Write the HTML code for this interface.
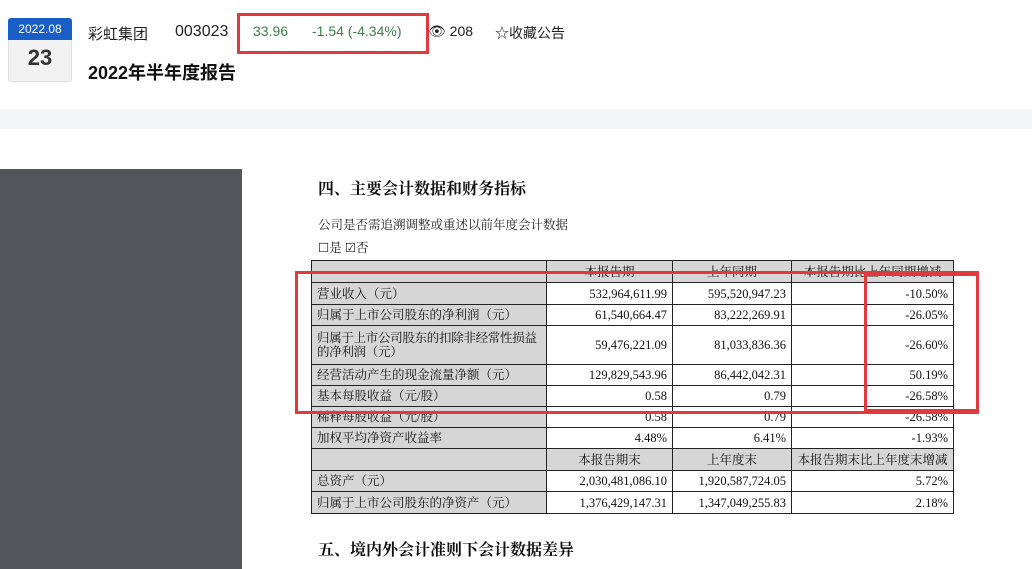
<!DOCTYPE html>
<html><head><meta charset="utf-8"><style>
body{margin:0;width:1032px;height:565px;overflow:hidden;background:#fff;font-family:"Liberation Sans","Noto Sans CJK SC",sans-serif;position:relative}
.a{position:absolute;white-space:nowrap}
.serif{font-family:"Liberation Serif","Noto Serif CJK SC",serif}
table{position:absolute;left:311px;top:260px;border-collapse:collapse;font-family:"Liberation Serif","Noto Serif CJK SC",serif;font-size:12.5px;color:#111;table-layout:fixed;width:642px}
td{border:1px solid #222;padding:0 5px;line-height:14px;white-space:nowrap;overflow:hidden}
td.l{background:#d6d6d6}
td.w{white-space:normal}
td.n{text-align:right;background:#fff}
tr.h td{background:#d6d6d6;text-align:center}
.r{position:absolute;border:3px solid #e03a3e;box-sizing:border-box}
</style></head><body>
<div class="a" style="left:8px;top:18px;width:64px;height:64px;background:#f2f2f2;border:1px solid #e0e0e0;border-radius:3px;box-sizing:border-box"></div>
<div class="a" style="left:8px;top:18px;width:64px;height:22px;background:#1a5fc8;border-radius:3px 3px 0 0;color:#fff;font-size:12px;text-align:center;line-height:22px">2022.08</div>
<div class="a" style="left:8px;top:45px;width:64px;text-align:center;font-size:22px;font-weight:bold;color:#333">23</div>
<div class="a" style="left:88px;top:23px;font-size:15px;color:#222">彩虹集团</div>
<div class="a" style="left:175px;top:23px;font-size:16px;color:#222">003023</div>
<div class="a" style="left:253px;top:23px;font-size:14px;color:#3c7f4c">33.96</div>
<div class="a" style="left:312px;top:23px;font-size:14px;color:#3c7f4c">-1.54 (-4.34%)</div>
<div class="a" style="left:428px;top:23px;font-size:14px;color:#222">👁 208</div>
<div class="a" style="left:495px;top:23px;font-size:14px;color:#222">☆收藏公告</div>
<div class="r" style="left:237px;top:13px;width:192px;height:41px"></div>
<div class="a" style="left:88px;top:59px;font-size:18px;font-weight:bold;color:#111">2022年半年度报告</div>
<div class="a" style="left:0;top:109px;width:1032px;height:20px;background:#f4f5f6"></div>
<div class="a" style="left:0;top:169px;width:242px;height:400px;background:#535659"></div>
<div class="a serif" style="left:318px;top:176px;font-size:16px;font-weight:bold;color:#111">四、主要会计数据和财务指标</div>
<div class="a serif" style="left:318px;top:215px;font-size:12.5px;color:#222">公司是否需追溯调整或重述以前年度会计数据</div>
<div class="a serif" style="left:318px;top:238px;font-size:12.5px;color:#222">☐是 ☑否</div>
<table>
<colgroup><col style="width:235px"><col style="width:126px"><col style="width:119px"><col style="width:162px"></colgroup>
<tr class="h" style="height:22px"><td class="l"></td><td>本报告期</td><td>上年同期</td><td>本报告期比上年同期增减</td></tr>
<tr style="height:22px"><td class="l">营业收入（元）</td><td class="n">532,964,611.99</td><td class="n">595,520,947.23</td><td class="n">-10.50%</td></tr>
<tr style="height:21px"><td class="l">归属于上市公司股东的净利润（元）</td><td class="n">61,540,664.47</td><td class="n">83,222,269.91</td><td class="n">-26.05%</td></tr>
<tr style="height:39px"><td class="l" style="white-space:normal;letter-spacing:-0.3px">归属于上市公司股东的扣除非经常性损益的净利润（元）</td><td class="n">59,476,221.09</td><td class="n">81,033,836.36</td><td class="n">-26.60%</td></tr>
<tr style="height:21px"><td class="l">经营活动产生的现金流量净额（元）</td><td class="n">129,829,543.96</td><td class="n">86,442,042.31</td><td class="n">50.19%</td></tr>
<tr style="height:21px"><td class="l">基本每股收益（元/股）</td><td class="n">0.58</td><td class="n">0.79</td><td class="n">-26.58%</td></tr>
<tr style="height:21px"><td class="l">稀释每股收益（元/股）</td><td class="n">0.58</td><td class="n">0.79</td><td class="n">-26.58%</td></tr>
<tr style="height:21px"><td class="l">加权平均净资产收益率</td><td class="n">4.48%</td><td class="n">6.41%</td><td class="n">-1.93%</td></tr>
<tr class="h" style="height:22px"><td class="l"></td><td>本报告期末</td><td>上年度末</td><td>本报告期末比上年度末增减</td></tr>
<tr style="height:21px"><td class="l">总资产（元）</td><td class="n">2,030,481,086.10</td><td class="n">1,920,587,724.05</td><td class="n">5.72%</td></tr>
<tr style="height:22px"><td class="l">归属于上市公司股东的净资产（元）</td><td class="n">1,376,429,147.31</td><td class="n">1,347,049,255.83</td><td class="n">2.18%</td></tr>
</table>
<div class="r" style="left:295px;top:271px;width:684px;height:143px;border-right:none"></div>
<div class="r" style="left:864px;top:273px;width:115px;height:139px"></div>
<div class="a serif" style="left:318px;top:537px;font-size:16px;font-weight:bold;color:#111">五、境内外会计准则下会计数据差异</div>
</body></html>
